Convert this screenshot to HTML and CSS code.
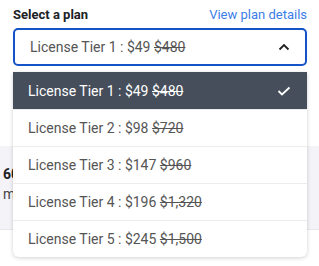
FILE: index.html
```html
<!DOCTYPE html>
<html lang="en">
<head>
    <meta charset="UTF-8">
    <title>Select a plan</title>
    <link rel="stylesheet" href="styles.css">
</head>
<body>
    <div class="plan-picker">
        <div class="picker-head">
            <span class="picker-label">Select a plan</span>
            <a class="picker-link" href="#">View plan details</a>
        </div>
        <div class="select-box">
            <span class="option-text">License Tier 1 : $49 <s>$480</s></span>
            <svg class="chevron" width="12" height="8" viewBox="0 0 12 8"><path d="M1.5 6.5 L6 2 L10.5 6.5" fill="none" stroke="#222" stroke-width="1.8"/></svg>
        </div>

        <ul class="dropdown">
            <li class="option selected">
                <span>License Tier 1 : $49 <s>$480</s></span>
                <svg width="14" height="10" viewBox="0 0 14 10"><path d="M1.5 5 L5 8.5 L12.5 1.5" fill="none" stroke="#fff" stroke-width="1.8"/></svg>
            </li>
            <li class="option"><span>License Tier 2 : $98 <s>$720</s></span></li>
            <li class="option"><span>License Tier 3 : $147 <s>$960</s></span></li>
            <li class="option"><span>License Tier 4 : $196 <s>$1,320</s></span></li>
            <li class="option"><span>License Tier 5 : $245 <s>$1,500</s></span></li>
        </ul>
    </div>

    <div class="summary">
        <div class="summary-title">60</div>
        <div class="summary-text">m</div>
    </div>
</body>
</html>
```

FILE: styles.css
```css
* {
    margin: 0;
    padding: 0;
    box-sizing: border-box;
    font-family: Roboto, 'Liberation Sans', sans-serif;
}

html, body {
    background: #fff;
    color: #202124;
    min-height: 266px;
}

.plan-picker {
    position: relative;
    padding: 5px 12px 0 13px;
    height: 146px;
}

.picker-head {
    display: flex;
    justify-content: space-between;
    align-items: center;
    height: 18px;
}

.picker-label {
    font-size: 13px;
    font-weight: 700;
    color: #202124;
}

.picker-link {
    font-size: 13px;
    color: #3b7ee8;
    text-decoration: none;
}

.select-box {
    margin-top: 5px;
    height: 38px;
    border: 2px solid #1553c9;
    border-radius: 5px;
    display: flex;
    align-items: center;
    justify-content: space-between;
    padding: 0 15px;
}

.option-text {
    font-size: 14px;
    color: #555;
}

.dropdown {
    list-style: none;
    position: absolute;
    top: 72px;
    left: 13px;
    right: 12px;
    background: #fff;
    border-radius: 0 0 6px 6px;
    box-shadow: 0 1px 4px rgba(0, 0, 0, 0.18);
    z-index: 2;
    overflow: hidden;
}

.option {
    height: 37px;
    display: flex;
    align-items: center;
    justify-content: space-between;
    padding: 0 16px 0 15px;
    font-size: 14px;
    color: #555;
    border-top: 1px solid #ececec;
}

.option:first-child {
    border-top: none;
}

.option.selected {
    background: #454e5a;
    color: #fff;
}

.summary {
    background: #f3f3f8;
    height: 84px;
    padding: 20px 3px;
    border-bottom: 1px solid #e6e6ee;
}

.summary-title {
    font-size: 14px;
    font-weight: 700;
}

.summary-text {
    font-size: 14px;
    color: #444;
    margin-top: 4px;
}
```
